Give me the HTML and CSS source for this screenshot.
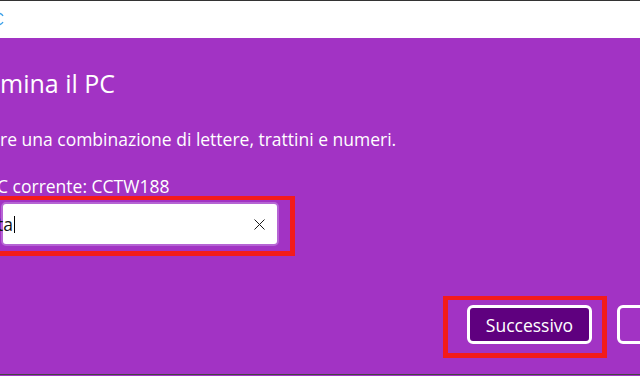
FILE: index.html
```html
<!DOCTYPE html>
<html lang="it">
<head>
  <meta charset="UTF-8" />
  <title>Rinomina il PC</title>
  <meta name="viewport" content="width=device-width, initial-scale=1.0" />
  <link rel="stylesheet" href="styles.css">
</head>
<body>

  <div class="titlebar">
    <svg class="app-icon" width="6" height="14" viewBox="0 0 6 14">
      <path d="M-4 2 A5 5 0 0 1 3 4" fill="none" stroke="#3ba0e8" stroke-width="1.4"/>
      <path d="M-4 12 A5 5 0 0 0 3 10" fill="none" stroke="#3ba0e8" stroke-width="1.4"/>
    </svg>
  </div>

  <div class="dialog">
    <h1 class="title">mina il PC</h1>
    <p class="hint">re una combinazione di lettere, trattini e numeri.</p>
    <p class="current">C corrente: CCTW188</p>

    <div class="mark mark-input">
      <div class="field">
        <span class="value">ta</span><span class="caret"></span>
        <svg class="clear" width="11" height="11" viewBox="0 0 11 11">
          <path d="M0.5 0.5 L10.5 10.5 M10.5 0.5 L0.5 10.5" stroke="#1a1a1a" stroke-width="1"/>
        </svg>
      </div>
    </div>

    <div class="footer">
      <div class="mark mark-button">
        <button class="btn btn-primary">Successivo</button>
      </div>
      <button class="btn btn-secondary">Annulla</button>
    </div>
  </div>

</body>
</html>
```

FILE: styles.css
```css
body {
  margin: 0;
  width: 640px;
  height: 376px;
  overflow: hidden;
  font-family: 'Open Sans', 'Noto Sans', sans-serif;
  background: #a233c4;
  color: #fff;
}

.titlebar {
  height: 37px;
  background: #fff;
  border-top: 1px solid #333;
  position: relative;
}

.app-icon {
  position: absolute;
  left: 0;
  top: 11px;
}

.dialog {
  height: 337px;
  box-sizing: border-box;
  border-bottom: 1px solid #444;
  background: #a233c4;
  display: flex;
  flex-direction: column;
  align-items: flex-start;
}

.title {
  margin: 27px 0 0 0;
  font-size: 25px;
  font-weight: 400;
  line-height: 36px;
  white-space: nowrap;
}

.hint {
  margin: 27px 0 0 0;
  font-size: 17.5px;
  line-height: 22px;
  white-space: nowrap;
}

.current {
  margin: 25px 0 0 -3px;
  font-size: 17.5px;
  line-height: 22px;
  white-space: nowrap;
}

.mark {
  border: 5px solid #f41b1b;
}

.mark-input {
  margin-top: -1px;
  margin-left: -10px;
  width: 305px;
  padding: 2px 11px 5px 6px;
  border-top-width: 4px;
  box-sizing: border-box;
}

.field {
  height: 40px;
  background: #fff;
  border: 2px solid #b664d4;
  border-radius: 5px;
  display: flex;
  align-items: center;
  color: #111;
  font-size: 17.5px;
}

.value {
  margin-left: -6px;
}

.caret {
  width: 1px;
  height: 17px;
  background: #000;
  margin-left: 1px;
}

.clear {
  margin-left: auto;
  margin-right: 12px;
}

.footer {
  margin-top: 40px;
  margin-left: 443px;
  display: flex;
  gap: 10px;
  align-items: flex-start;
}

.mark-button {
  padding: 5px 10px 9px 19px;
  border-width: 4px 5px 5px 5px;
}

.btn {
  font-family: 'Open Sans', 'Noto Sans', sans-serif;
  font-size: 17.5px;
  color: #fff;
  height: 39px;
  border: 3px solid #fff;
  border-radius: 6px;
  padding: 0 14px;
  cursor: pointer;
}

.btn-primary {
  width: 125px;
  background: #5f007f;
}

.btn-secondary {
  margin-top: 9px;
  width: 125px;
  background: transparent;
}
```
